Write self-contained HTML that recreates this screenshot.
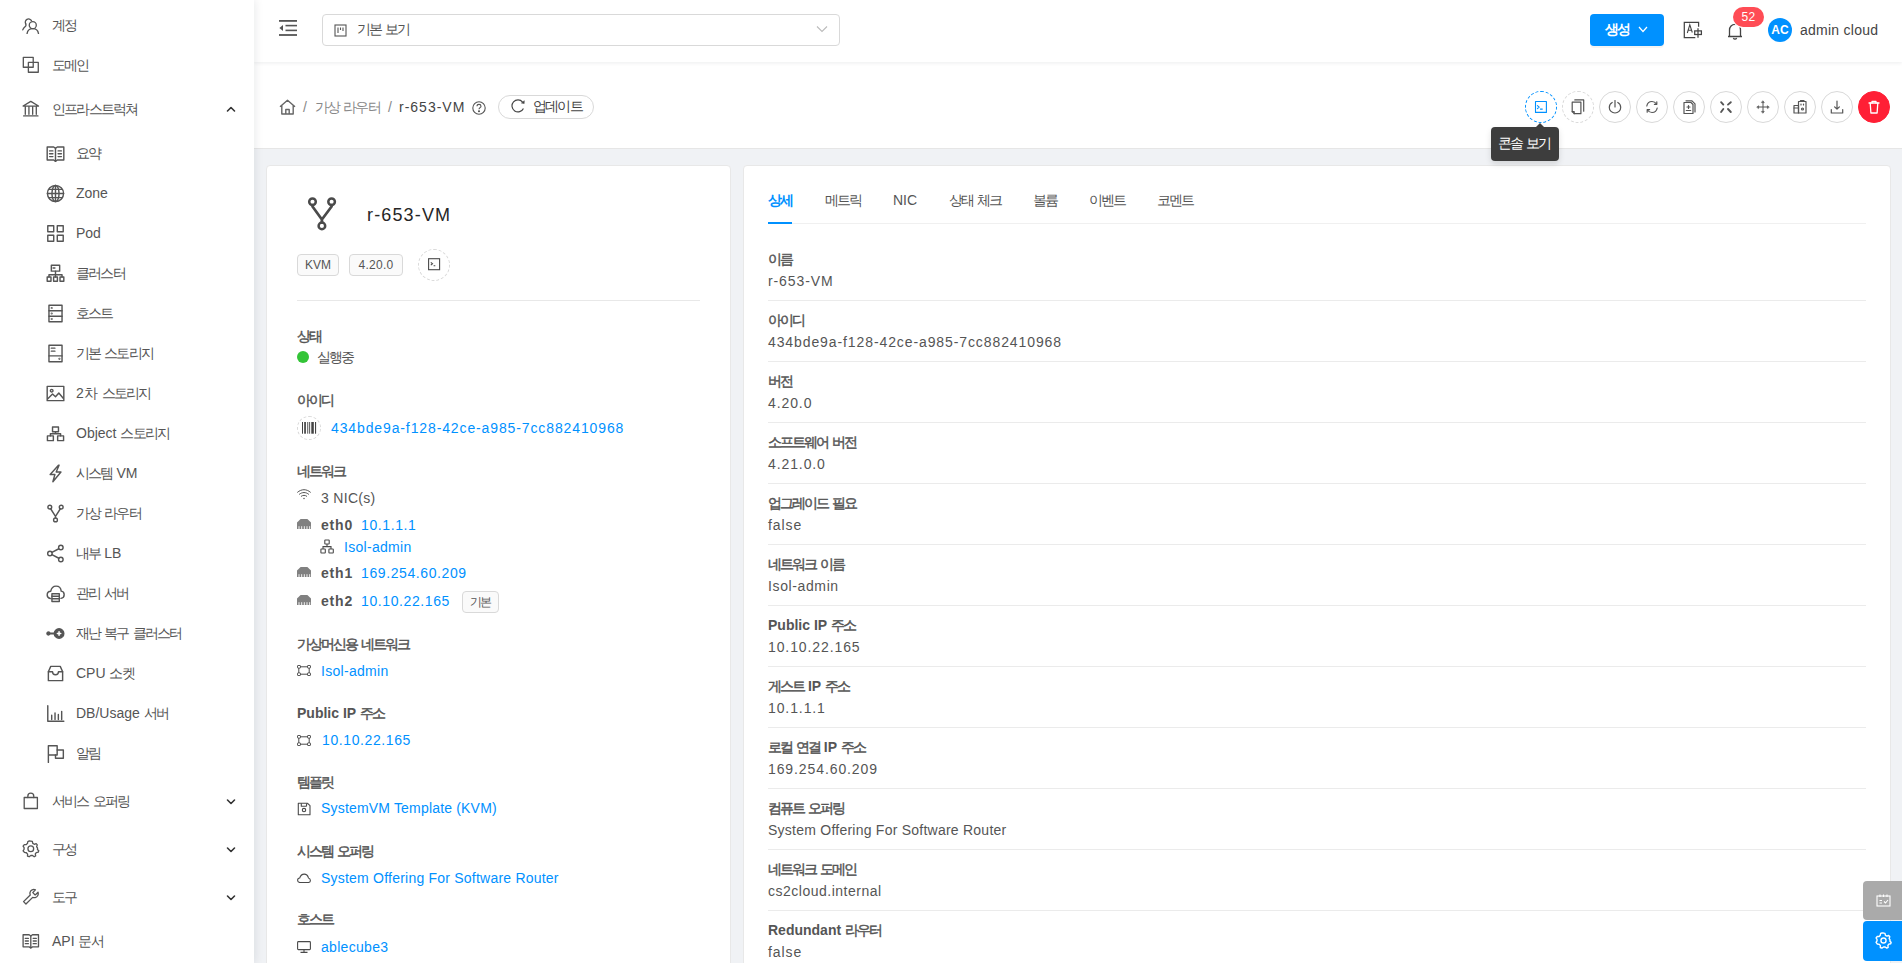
<!DOCTYPE html>
<html><head><meta charset="utf-8"><title>r-653-VM</title>
<style>
*{box-sizing:border-box;margin:0;padding:0}
html,body{width:1902px;height:963px;overflow:hidden;background:#f0f2f5;font-family:"Liberation Sans",sans-serif;font-size:14px;color:#555}
.abs{position:absolute;white-space:nowrap}
.k{letter-spacing:-1.8px}
.lbl .k{letter-spacing:-2px;font-weight:normal;-webkit-text-stroke:.45px #555}
.mt{font-size:14px;line-height:20px;color:#555;white-space:nowrap}
.ic svg{display:block}
#side{position:absolute;left:0;top:0;width:254px;height:963px;background:#fff;z-index:5;box-shadow:2px 0 8px rgba(0,21,41,.08)}
#header{position:absolute;left:254px;top:0;width:1648px;height:62px;background:#fff;box-shadow:0 1px 4px rgba(0,21,41,.08);z-index:3}
#crumb{position:absolute;left:254px;top:62px;width:1648px;height:86px;background:#fff;box-shadow:0 1px 0 #e6e6e6;z-index:2}
#hdr, #crb{position:absolute;left:0;top:0;z-index:6}
.actbtn{z-index:6;width:32px;height:32px;border-radius:50%;border:1px solid #d9d9d9;background:#fff;display:flex;align-items:center;justify-content:center}
.actbtn.dashblue{border:1px dashed #0091ff}
.actbtn.dashgrey{border:1px dashed #d9d9d9}
.actbtn.red{background:#ff1f35;border-color:#ff1f35}
.card{position:absolute;background:#fff;border:1px solid #e8e8e8;border-radius:5px}
.lbl{position:absolute;font-weight:bold;color:#555;line-height:20px;white-space:nowrap}
.val{position:absolute;color:#555;line-height:20px;white-space:nowrap}
.lnk{position:absolute;color:#0091ff;line-height:20px;white-space:nowrap}
.tag{position:absolute;height:22px;border:1px solid #d9d9d9;background:#fafafa;border-radius:4px;font-size:12px;line-height:20px;text-align:center;color:#555}
.div{position:absolute;height:1px;background:#ebebeb}
.tab{position:absolute;top:190px;line-height:20px;color:#555;white-space:nowrap}
</style></head><body>
<div id="side">
<div class="abs ic" style="left:22.2px;top:16.2px"><svg width="17.6" height="17.6" viewBox="0 0 16 16" fill="none" stroke="#555" stroke-width="1.2" stroke-linecap="round" stroke-linejoin="round" ><path d="M3.4 7.2 A2.9 2.9 0 1 1 8.6 4.2"/><path d="M3.4 7.2 C3.6 8.2 3.9 8.6 3.2 9.4 C2 10.4 1.1 11.2 0.7 12.6"/><circle cx="9.8" cy="8.3" r="3.2" fill="#fff"/><path d="M4.6 16 C5 13.2 7.2 11.5 9.8 11.5 C12.4 11.5 14.6 13.2 15 16"/></svg></div>
<div class="abs mt" style="left:52px;top:15px"><span class="k">계정</span></div>
<div class="abs ic" style="left:22.2px;top:56.2px"><svg width="17.6" height="17.6" viewBox="0 0 16 16" fill="none" stroke="#555" stroke-width="1.2" stroke-linecap="round" stroke-linejoin="round" ><rect x="1.2" y="1.2" width="9" height="9"/><rect x="5.8" y="5.8" width="9" height="9"/></svg></div>
<div class="abs mt" style="left:52px;top:55px"><span class="k">도메인</span></div>
<div class="abs ic" style="left:22.2px;top:100.2px"><svg width="17.6" height="17.6" viewBox="0 0 16 16" fill="none" stroke="#555" stroke-width="1.2" stroke-linecap="round" stroke-linejoin="round" ><path d="M1 5.5 L8 1.2 L15 5.5 Z"/><path d="M3 6 V13 M6.3 6 V13 M9.7 6 V13 M13 6 V13"/><path d="M1.5 14.5 H14.5"/></svg></div>
<div class="abs mt" style="left:52px;top:99px"><span class="k">인프라스트럭쳐</span></div>
<svg class="abs" style="left:226px;top:105px" width="10" height="9" viewBox="0 0 10 9" fill="none" stroke="#333" stroke-width="1.6" stroke-linecap="round" stroke-linejoin="round"><path d="M1.5 6 L5 2.5 L8.5 6"/></svg>
<div class="abs ic" style="left:22.2px;top:792.2px"><svg width="17.6" height="17.6" viewBox="0 0 16 16" fill="none" stroke="#555" stroke-width="1.2" stroke-linecap="round" stroke-linejoin="round" ><rect x="2" y="5" width="12" height="10"/><path d="M5.3 5 V3.8 C5.3 2.3 6.5 1.1 8 1.1 C9.5 1.1 10.7 2.3 10.7 3.8 V5"/></svg></div>
<div class="abs mt" style="left:52px;top:791px"><span class="k">서비스</span> <span class="k">오퍼링</span></div>
<svg class="abs" style="left:226px;top:797px" width="10" height="9" viewBox="0 0 10 9" fill="none" stroke="#333" stroke-width="1.6" stroke-linecap="round" stroke-linejoin="round"><path d="M1.5 3 L5 6.5 L8.5 3"/></svg>
<div class="abs ic" style="left:22.2px;top:840.2px"><svg width="17.6" height="17.6" viewBox="0 0 16 16" fill="none" stroke="#555" stroke-width="1.2" stroke-linecap="round" stroke-linejoin="round" ><path d="M8 1 L9.4 1.3 L9.8 3.1 L11.2 3.9 L12.9 3.3 L13.9 4.4 L13.3 6.2 L14.1 7.2 V8.8 L15.2 9.6 L14.8 11.1 L13 11.4 L12.1 12.7 L12.4 14.5 L11.1 15.2 L9.6 14.1 H8 L6.5 15.2 L5 14.6 L5.1 12.8 L4 11.6 L2.2 11.3 L1 9.8 L1.9 8.4 V7 L1 5.6 L2.1 4.2 L3.9 4.2 L5 3 L5.3 1.4 L6.6 0.9 Z"/><circle cx="8" cy="8" r="2.6"/></svg></div>
<div class="abs mt" style="left:52px;top:839px"><span class="k">구성</span></div>
<svg class="abs" style="left:226px;top:845px" width="10" height="9" viewBox="0 0 10 9" fill="none" stroke="#333" stroke-width="1.6" stroke-linecap="round" stroke-linejoin="round"><path d="M1.5 3 L5 6.5 L8.5 3"/></svg>
<div class="abs ic" style="left:22.2px;top:888.2px"><svg width="17.6" height="17.6" viewBox="0 0 16 16" fill="none" stroke="#555" stroke-width="1.2" stroke-linecap="round" stroke-linejoin="round" ><path d="M14.6 3.8 L12 6.3 L9.8 4.2 L12.2 1.6 C10.2 0.8 7.8 1.8 7.3 4 C7.1 4.8 7.2 5.6 7.5 6.3 L1.4 12.4 L3.6 14.6 L9.7 8.5 C10.4 8.8 11.2 8.9 12 8.7 C14.2 8.2 15.3 5.8 14.6 3.8 Z"/></svg></div>
<div class="abs mt" style="left:52px;top:887px"><span class="k">도구</span></div>
<svg class="abs" style="left:226px;top:893px" width="10" height="9" viewBox="0 0 10 9" fill="none" stroke="#333" stroke-width="1.6" stroke-linecap="round" stroke-linejoin="round"><path d="M1.5 3 L5 6.5 L8.5 3"/></svg>
<div class="abs ic" style="left:22.2px;top:932.2px"><svg width="17.6" height="17.6" viewBox="0 0 16 16" fill="none" stroke="#555" stroke-width="1.2" stroke-linecap="round" stroke-linejoin="round" ><path d="M1 2.5 H6.5 L8 3.6 L9.5 2.5 H15 V13.5 H9.5 L8 14.6 L6.5 13.5 H1 Z"/><path d="M8 3.6 V14.3"/><path d="M3 5.8 H5.8 M3 8.2 H5.8 M10.2 5.8 H13 M10.2 8.2 H13 M3 10.6 H5.8 M10.2 10.6 H13"/></svg></div>
<div class="abs mt" style="left:52px;top:931px">API <span class="k">문서</span></div>
<div class="abs ic" style="left:45.5px;top:143.5px"><svg width="19" height="19" viewBox="0 0 16 16" fill="none" stroke="#555" stroke-width="1.2" stroke-linecap="round" stroke-linejoin="round" ><path d="M1 2.5 H6.5 L8 3.6 L9.5 2.5 H15 V13.5 H9.5 L8 14.6 L6.5 13.5 H1 Z"/><path d="M8 3.6 V14.3"/><path d="M3 5.8 H5.8 M3 8.2 H5.8 M10.2 5.8 H13 M10.2 8.2 H13 M3 10.6 H5.8 M10.2 10.6 H13"/></svg></div>
<div class="abs mt" style="left:76px;top:143px"><span class="k">요약</span></div>
<div class="abs ic" style="left:45.5px;top:183.5px"><svg width="19" height="19" viewBox="0 0 16 16" fill="none" stroke="#555" stroke-width="1.2" stroke-linecap="round" stroke-linejoin="round" ><circle cx="8" cy="8" r="6.8"/><ellipse cx="8" cy="8" rx="3" ry="6.8"/><path d="M1.2 8 H14.8 M2.2 4.5 H13.8 M2.2 11.5 H13.8 M8 1.2 V14.8"/></svg></div>
<div class="abs mt" style="left:76px;top:183px">Zone</div>
<div class="abs ic" style="left:45.5px;top:223.5px"><svg width="19" height="19" viewBox="0 0 16 16" fill="none" stroke="#555" stroke-width="1.2" stroke-linecap="round" stroke-linejoin="round" ><rect x="1.5" y="1.5" width="5" height="5"/><rect x="9.5" y="1.5" width="5" height="5"/><rect x="1.5" y="9.5" width="5" height="5"/><rect x="9.5" y="9.5" width="5" height="5"/></svg></div>
<div class="abs mt" style="left:76px;top:223px">Pod</div>
<div class="abs ic" style="left:45.5px;top:263.5px"><svg width="19" height="19" viewBox="0 0 16 16" fill="none" stroke="#555" stroke-width="1.2" stroke-linecap="round" stroke-linejoin="round" ><rect x="4.5" y="1" width="7" height="5"/><path d="M8 6 V9 M2.5 9 H13.5 M2.5 9 V11 M8 9 V11 M13.5 9 V11"/><rect x="1" y="11" width="3.2" height="3.5"/><rect x="6.4" y="11" width="3.2" height="3.5"/><rect x="11.8" y="11" width="3.2" height="3.5"/><path d="M6 3.3 H7.5"/></svg></div>
<div class="abs mt" style="left:76px;top:263px"><span class="k">클러스터</span></div>
<div class="abs ic" style="left:45.5px;top:303.5px"><svg width="19" height="19" viewBox="0 0 16 16" fill="none" stroke="#555" stroke-width="1.2" stroke-linecap="round" stroke-linejoin="round" ><rect x="2.5" y="1" width="11" height="14"/><path d="M2.5 5.7 H13.5 M2.5 10.3 H13.5"/><circle cx="4.8" cy="3.4" r=".3"/><circle cx="4.8" cy="8" r=".3"/><circle cx="4.8" cy="12.6" r=".3"/></svg></div>
<div class="abs mt" style="left:76px;top:303px"><span class="k">호스트</span></div>
<div class="abs ic" style="left:45.5px;top:343.5px"><svg width="19" height="19" viewBox="0 0 16 16" fill="none" stroke="#555" stroke-width="1.2" stroke-linecap="round" stroke-linejoin="round" ><rect x="2.5" y="1" width="11" height="14"/><path d="M2.5 10 H13.5 M4.5 3.5 H7.5 M4.5 6 H7.5"/><circle cx="11.3" cy="12.5" r=".3"/></svg></div>
<div class="abs mt" style="left:76px;top:343px"><span class="k">기본</span> <span class="k">스토리지</span></div>
<div class="abs ic" style="left:45.5px;top:383.5px"><svg width="19" height="19" viewBox="0 0 16 16" fill="none" stroke="#555" stroke-width="1.2" stroke-linecap="round" stroke-linejoin="round" ><rect x="1" y="2" width="14" height="12"/><circle cx="4.8" cy="5.6" r="1.1"/><path d="M1.5 12.5 L5.5 8.5 L8 10.8 L10.8 7.6 L14.5 12"/></svg></div>
<div class="abs mt" style="left:76px;top:383px">2차 <span class="k">스토리지</span></div>
<div class="abs ic" style="left:45.5px;top:423.5px"><svg width="19" height="19" viewBox="0 0 16 16" fill="none" stroke="#555" stroke-width="1.2" stroke-linecap="round" stroke-linejoin="round" ><rect x="5.5" y="2.5" width="5" height="4"/><rect x="1.2" y="10" width="5" height="4"/><rect x="9.8" y="10" width="5" height="4"/><path d="M8 6.5 V8.2 H3.7 V10 M8 8.2 H12.3 V10"/></svg></div>
<div class="abs mt" style="left:76px;top:423px">Object <span class="k">스토리지</span></div>
<div class="abs ic" style="left:45.5px;top:463.5px"><svg width="19" height="19" viewBox="0 0 16 16" fill="none" stroke="#555" stroke-width="1.2" stroke-linecap="round" stroke-linejoin="round" ><path d="M10.5 1 L3.5 8.8 H7.5 L5.8 15 L12.6 6.8 H8.6 L11 1 Z"/></svg></div>
<div class="abs mt" style="left:76px;top:463px"><span class="k">시스템</span> VM</div>
<div class="abs ic" style="left:45.5px;top:503.5px"><svg width="19" height="19" viewBox="0 0 16 16" fill="none" stroke="#555" stroke-width="1.2" stroke-linecap="round" stroke-linejoin="round" ><circle cx="3.2" cy="2.6" r="1.6"/><circle cx="12.8" cy="2.6" r="1.6"/><circle cx="8" cy="13.4" r="1.6"/><path d="M3.9 4 L8 10.5 L12.1 4 M8 10.5 V11.8"/></svg></div>
<div class="abs mt" style="left:76px;top:503px"><span class="k">가상</span> <span class="k">라우터</span></div>
<div class="abs ic" style="left:45.5px;top:543.5px"><svg width="19" height="19" viewBox="0 0 16 16" fill="none" stroke="#555" stroke-width="1.2" stroke-linecap="round" stroke-linejoin="round" ><circle cx="12.5" cy="3" r="1.9"/><circle cx="3.3" cy="8" r="1.9"/><circle cx="12.5" cy="13" r="1.9"/><path d="M5 7.1 L10.8 4 M5 8.9 L10.8 12"/></svg></div>
<div class="abs mt" style="left:76px;top:543px"><span class="k">내부</span> LB</div>
<div class="abs ic" style="left:45.5px;top:583.5px"><svg width="19" height="19" viewBox="0 0 16 16" fill="none" stroke="#555" stroke-width="1.2" stroke-linecap="round" stroke-linejoin="round" ><path d="M3.6 12.2 C1.8 11.8 1 10.6 1 9.2 C1 7.4 2.4 6.2 4 6.1 C4.5 3.4 6.3 1.8 8.5 1.8 C10.9 1.8 12.6 3.6 12.8 6 C14.3 6.2 15.3 7.4 15.3 9 C15.3 10.6 14.3 11.8 12.6 12.1"/><rect x="5" y="8.2" width="6.2" height="6.5"/><path d="M5 10.3 H11.2 M5 12.4 H11.2"/></svg></div>
<div class="abs mt" style="left:76px;top:583px"><span class="k">관리</span> <span class="k">서버</span></div>
<div class="abs ic" style="left:45.5px;top:623.5px"><svg width="19" height="19" viewBox="0 0 16 16" fill="none" stroke="#555" stroke-width="1.2" stroke-linecap="round" stroke-linejoin="round" ><circle cx="11" cy="8" r="4" fill="#555"/><path d="M9.6 8 H12.4 M11 6.6 V9.4" stroke="#fff" stroke-width="1.3"/><path d="M2.5 8 H7" stroke-width="1.5"/><circle cx="2" cy="8" r="1.2" fill="#555"/></svg></div>
<div class="abs mt" style="left:76px;top:623px"><span class="k">재난</span> <span class="k">복구</span> <span class="k">클러스터</span></div>
<div class="abs ic" style="left:45.5px;top:663.5px"><svg width="19" height="19" viewBox="0 0 16 16" fill="none" stroke="#555" stroke-width="1.2" stroke-linecap="round" stroke-linejoin="round" ><path d="M2 6.5 L4 2 H12 L14 6.5 V14 H2 Z"/><path d="M2 6.5 H5.5 C5.5 8 6.6 9 8 9 C9.4 9 10.5 8 10.5 6.5 H14"/></svg></div>
<div class="abs mt" style="left:76px;top:663px">CPU <span class="k">소켓</span></div>
<div class="abs ic" style="left:45.5px;top:703.5px"><svg width="19" height="19" viewBox="0 0 16 16" fill="none" stroke="#555" stroke-width="1.2" stroke-linecap="round" stroke-linejoin="round" ><path d="M1.5 1.5 V14.5 H15"/><path d="M4.8 13 V9.5 M7.6 13 V7.5 M10.4 13 V8.8 M13.2 13 V6.2"/></svg></div>
<div class="abs mt" style="left:76px;top:703px">DB/Usage <span class="k">서버</span></div>
<div class="abs ic" style="left:45.5px;top:743.5px"><svg width="19" height="19" viewBox="0 0 16 16" fill="none" stroke="#555" stroke-width="1.2" stroke-linecap="round" stroke-linejoin="round" ><path d="M2 15.5 V1.5 H9.4 V5 H14.6 V12 H8 V9.2 H2.2"/><path d="M9.4 5 V9.2 H8"/></svg></div>
<div class="abs mt" style="left:76px;top:743px"><span class="k">알림</span></div>
</div>
<div id="header"></div>
<div id="crumb"></div>
<div id="hdr">
<svg class="abs" style="left:279px;top:14px" width="18" height="24" viewBox="0 0 18 24" fill="#555"><rect x="0" y="6" width="18" height="1.8"/><rect x="6.5" y="10.8" width="11.5" height="1.6"/><rect x="6.5" y="15.6" width="11.5" height="1.6"/><rect x="0" y="20.1" width="18" height="1.8"/><path d="M0.4 14 L4 10.9 V17.1 Z"/></svg>
<div class="abs" style="left:322px;top:14px;width:518px;height:32px;border:1px solid #d9d9d9;border-radius:4px;background:#fff"></div>
<svg class="abs" style="left:334px;top:24px" width="13" height="13" viewBox="0 0 13 13" fill="none" stroke="#555" stroke-width="1.1"><rect x="1" y="1" width="11" height="11"/><path d="M4 3.5 V9 M6.5 3.5 V6 M9 3.5 V7"/></svg>
<div class="abs mt" style="left:357px;top:19px"><span class="k">기본</span> <span class="k">보기</span></div>
<svg class="abs" style="left:816px;top:25px" width="12" height="8" viewBox="0 0 12 8" fill="none" stroke="#bbb" stroke-width="1.1"><path d="M1 1.5 L6 6.5 L11 1.5"/></svg>
<div class="abs" style="left:1590px;top:14px;width:74px;height:32px;border-radius:4px;background:#0091ff;box-shadow:0 2px 0 rgba(0,0,0,.045)"></div>
<div class="abs" style="left:1605px;top:19px;color:#fff;font-weight:bold;line-height:20px"><span class="k">생성</span></div>
<svg class="abs" style="left:1638px;top:26px" width="10" height="7" viewBox="0 0 10 7" fill="none" stroke="#fff" stroke-width="1.2"><path d="M1 1 L5 5.5 L9 1"/></svg>
<svg class="abs" style="left:1683px;top:21px" width="20" height="18" viewBox="0 0 20 18" fill="none" stroke="#444" stroke-width="1.25"><path d="M12.3 16.5 H1.3 V1.3 H15.6 V5.7"/><path d="M4.3 12 L6.8 3.8 L9.3 11.5 M5.3 9.2 H8.5" stroke-width="1.05"/><rect x="11.7" y="9.9" width="6.7" height="3.6"/><path d="M15 7.3 V16.8"/></svg>
<svg class="abs" style="left:1727px;top:22px" width="16" height="18" viewBox="0 0 16 18" fill="none" stroke="#444" stroke-width="1.3"><path d="M2.5 14.5 V8 C2.5 4.8 4.8 2.3 8 2.3 C11.2 2.3 13.5 4.8 13.5 8 V14.5 M1 14.5 H15 M6.3 16.2 C6.8 17 7.4 17.2 8 17.2 C8.6 17.2 9.2 17 9.7 16.2"/></svg>
<div class="abs" style="left:1733px;top:7px;width:31px;height:20px;border-radius:10px;background:#ff4c55;box-shadow:0 0 0 1px #fff;color:#fff;font-size:12px;line-height:20px;text-align:center;letter-spacing:.3px;z-index:2">52</div>
<div class="abs" style="left:1768px;top:18px;width:24px;height:24px;border-radius:50%;background:#0091ff;color:#fff;font-size:12px;line-height:24px;text-align:center;font-weight:bold">AC</div>
<div class="abs" style="left:1800px;top:20px;line-height:20px;color:#444;letter-spacing:.25px">admin cloud</div>
<svg class="abs" style="left:279px;top:99px" width="17" height="16" viewBox="0 0 17 16" fill="none" stroke="#666" stroke-width="1.4" stroke-linejoin="round"><path d="M1 7.8 L8.5 1.2 L16 7.8 M2.8 6.5 V15 H14.2 V6.5 M6.8 15 V10.5 H10.2 V15"/></svg>
<div class="abs mt" style="left:303px;top:97px;color:#888">/</div>
<div class="abs mt" style="left:315px;top:97px;color:#888"><span class="k">가상</span> <span class="k">라우터</span></div>
<div class="abs mt" style="left:388px;top:97px;color:#888">/</div>
<div class="abs mt" style="left:399px;top:97px;color:#444;letter-spacing:1px">r-653-VM</div>
<svg class="abs" style="left:472px;top:101px" width="14" height="14" viewBox="0 0 14 14" fill="none" stroke="#555" stroke-width="1.1"><circle cx="7" cy="7" r="6.2"/><path d="M5 5.3 C5 4.1 5.9 3.4 7 3.4 C8.1 3.4 9 4.1 9 5.2 C9 6.6 7 6.7 7 8.3"/><circle cx="7" cy="10.3" r=".5" fill="#555"/></svg>
<div class="abs" style="left:498px;top:95px;width:96px;height:24px;border:1px solid #d9d9d9;border-radius:12px;background:#fff"></div>
<svg class="abs" style="left:511px;top:99px" width="14" height="14" viewBox="0 0 14 14" fill="none" stroke="#444" stroke-width="1.15"><path d="M11.6 3.04 A6 6 0 1 0 12.44 9.44"/><path d="M13.3 1.7 L13.2 4.6 L10.4 4.1 Z" fill="#444" stroke-width=".5"/></svg>
<div class="abs mt" style="left:533px;top:96px;color:#444"><span class="k">업데이트</span></div>
</div>
<div class="abs actbtn dashblue" style="left:1525px;top:91px"><svg width="16" height="16" viewBox="0 0 16 16" fill="none" stroke="#555" stroke-width="1.2" stroke-linecap="round" stroke-linejoin="round"><rect x="2.5" y="2.5" width="10.9" height="10.9" stroke="#0091ff" stroke-width="1.1"/><path d="M4.4 6.6 L6.2 8.1 L4.4 9.7 M7.4 10.1 H9.3" stroke="#0091ff" stroke-width="1.1"/></svg></div>
<div class="abs actbtn dashgrey" style="left:1562px;top:91px"><svg width="16" height="16" viewBox="0 0 16 16" fill="none" stroke="#555" stroke-width="1.2" stroke-linecap="round" stroke-linejoin="round"><path d="M2.2 3.2 H10.9 V14.7 H4.2 L2.2 12.7 Z"/><path d="M4.2 14.7 V12.7 H2.2"/><path d="M4.8 0.9 H13.7 V12.2"/></svg></div>
<div class="abs actbtn" style="left:1599px;top:91px"><svg width="16" height="16" viewBox="0 0 16 16" fill="none" stroke="#555" stroke-width="1.2" stroke-linecap="round" stroke-linejoin="round"><path d="M5.2 3.5 C3.3 4.5 2.3 6.3 2.3 8.4 C2.3 11.5 4.9 14 8 14 C11.1 14 13.7 11.5 13.7 8.4 C13.7 6.3 12.7 4.5 10.8 3.5"/><path d="M8 1.6 V8"/></svg></div>
<div class="abs actbtn" style="left:1636px;top:91px"><svg width="16" height="16" viewBox="0 0 16 16" fill="none" stroke="#555" stroke-width="1.2" stroke-linecap="round" stroke-linejoin="round"><path d="M2.8 7 C3.3 4.3 5.4 2.5 8 2.5 C9.9 2.5 11.5 3.5 12.5 5 M13.2 9 C12.7 11.7 10.6 13.5 8 13.5 C6.1 13.5 4.5 12.5 3.5 11"/><path d="M12.8 2.8 V5.3 H10.4 M3.2 13.2 V10.7 H5.6"/></svg></div>
<div class="abs actbtn" style="left:1673px;top:91px"><svg width="16" height="16" viewBox="0 0 16 16" fill="none" stroke="#555" stroke-width="1.2" stroke-linecap="round" stroke-linejoin="round"><path d="M3 3.5 H10 L12 5.5 V14.5 H3 Z"/><path d="M5 1.8 H11 L14 4.8 V13"/><path d="M5.3 11.5 H9.7"/><path d="M7.5 6.5 V9.5 M6 8 H9"/></svg></div>
<div class="abs actbtn" style="left:1710px;top:91px"><svg width="16" height="16" viewBox="0 0 16 16" fill="none" stroke="#555" stroke-width="1.2" stroke-linecap="round" stroke-linejoin="round"><path d="M3.1 3.2 L5.3 5.6 M10 5.6 L12.8 3.2 M3.1 13 L5.3 10 M10 10 L12.8 13" stroke-width="1.9"/></svg></div>
<div class="abs actbtn" style="left:1747px;top:91px"><svg width="16" height="16" viewBox="0 0 16 16" fill="none" stroke="#555" stroke-width="1.2" stroke-linecap="round" stroke-linejoin="round"><path d="M8 3 V13 M3 8 H13" stroke-width="1"/><path d="M8 2 L9.3 3.6 H6.7 Z M8 14 L9.3 12.4 H6.7 Z M2 8 L3.6 6.7 V9.3 Z M14 8 L12.4 6.7 V9.3 Z" fill="#555" stroke-width=".6"/></svg></div>
<div class="abs actbtn" style="left:1784px;top:91px"><svg width="16" height="16" viewBox="0 0 16 16" fill="none" stroke="#555" stroke-width="1.2" stroke-linecap="round" stroke-linejoin="round"><rect x="6.5" y="2.5" width="7.5" height="11.5"/><path d="M8.5 2.5 V1.5 H12 V2.5"/><rect x="2" y="6.5" width="4.5" height="7.5"/><path d="M2 9 H6.5"/><path d="M9 5 V6 M11.5 5 V6"/><circle cx="10.5" cy="10" r="1"/></svg></div>
<div class="abs actbtn" style="left:1821px;top:91px"><svg width="16" height="16" viewBox="0 0 16 16" fill="none" stroke="#555" stroke-width="1.2" stroke-linecap="round" stroke-linejoin="round"><path d="M8 2 V10 M5.6 7.8 L8 10.2 L10.4 7.8"/><path d="M2.3 10.5 V14 H13.7 V10.5"/></svg></div>
<div class="abs actbtn red" style="left:1858px;top:91px"><svg width="16" height="16" viewBox="0 0 16 16" fill="none" stroke="#555" stroke-width="1.2" stroke-linecap="round" stroke-linejoin="round"><path d="M3 4 H13" stroke="#fff" stroke-width="1.3"/><path d="M6 4 V2.5 H10 V4" stroke="#fff" stroke-width="1.3"/><path d="M4.2 4 L4.9 14 H11.1 L11.8 4" stroke="#fff" stroke-width="1.3"/></svg></div>
<div class="abs" style="left:1491px;top:127px;width:68px;height:34px;background:#3d3d3d;border-radius:4px;z-index:9;box-shadow:0 3px 6px rgba(0,0,0,.12)"></div>
<div class="abs" style="left:1535px;top:123px;width:0;height:0;border-left:5px solid transparent;border-right:5px solid transparent;border-bottom:5px solid #3d3d3d;z-index:9"></div>
<div class="abs" style="left:1497.5px;top:133px;color:#fff;line-height:20px;z-index:10;white-space:nowrap"><span class="k">콘솔</span> <span class="k">보기</span></div>
<div class="card" style="left:266px;top:165px;width:465px;height:820px;border-radius:4px"></div>
<div class="card" style="left:743px;top:165px;width:1148px;height:820px;border-radius:4px"></div>
<svg class="abs" style="left:300px;top:190px" width="45" height="48" viewBox="0 0 45 48" fill="none" stroke="#4a4a4a" stroke-width="2.5" stroke-linecap="round" stroke-linejoin="round"><circle cx="12.5" cy="11.7" r="3.3"/><circle cx="31.6" cy="11.7" r="3.3"/><circle cx="21.9" cy="35.9" r="3.3"/><path d="M12.5 15 V16.5 L21.9 29.5 L31.6 16.5 V15 M21.9 29.5 V32.6" stroke-width="2.7"/></svg>
<div class="abs" style="left:367px;top:203px;font-size:18px;line-height:24px;color:#262626;letter-spacing:1.15px">r-653-VM</div>
<div class="tag" style="left:297px;top:254px;width:42px">KVM</div>
<div class="tag" style="left:349px;top:254px;width:54px;letter-spacing:.3px">4.20.0</div>
<div class="abs" style="left:418px;top:249px;width:32px;height:32px;border:1px dashed #d9d9d9;border-radius:50%"></div>
<svg class="abs" style="left:427px;top:257px" width="14" height="14" viewBox="0 0 14 14" fill="none" stroke="#4a4a4a" stroke-width="1.1"><rect x="1.6" y="1.7" width="11" height="11"/><path d="M3.8 5.3 L5.5 6.7 L3.8 8.1 M6.6 8.7 H8.3"/></svg>
<div class="div" style="left:297px;top:300px;width:403px;background:#e8e8e8"></div>
<div class="lbl" style="left:297px;top:326px;"><span class="k">상태</span></div>
<div class="abs" style="left:297px;top:351px;width:12px;height:12px;border-radius:50%;background:#33c437"></div>
<div class="val" style="left:317px;top:347px;"><span class="k">실행중</span></div>
<div class="lbl" style="left:297px;top:390px;"><span class="k">아이디</span></div>
<div class="abs" style="left:297px;top:416px;width:24px;height:24px;border:1px dashed #d9d9d9;border-radius:50%"></div>
<svg class="abs" style="left:301px;top:421px" width="16" height="14" viewBox="0 0 16 14" fill="#444"><rect x="1" y="1" width="1" height="11.7"/><rect x="3.2" y="1" width="1.7" height="11.7"/><rect x="6.3" y="1" width=".9" height="11.7"/><rect x="8.2" y="1" width=".9" height="11.7"/><rect x="10.3" y="1" width="2.5" height="11.7"/><rect x="14" y="1" width="1.1" height="11.7"/></svg>
<div class="lnk" style="left:331px;top:418px;letter-spacing:.88px">434bde9a-f128-42ce-a985-7cc882410968</div>
<div class="lbl" style="left:297px;top:461px;"><span class="k">네트워크</span></div>
<svg class="abs" style="left:297px;top:488.5px" width="14" height="12" viewBox="0 0 14 12" fill="none" stroke="#555" stroke-width="1" stroke-linecap="round"><path d="M0.6 3.2 C4.6 -0.2 9.4 -0.2 13.4 3.2 M2.4 5.2 C5.2 2.9 8.8 2.9 11.6 5.2 M4.3 7.2 C5.9 6 8.1 6 9.7 7.2"/><circle cx="7" cy="9.6" r=".75" fill="#555" stroke="none"/></svg>
<div class="val" style="left:321px;top:488px;letter-spacing:.3px">3 NIC(s)</div>
<svg class="abs" style="left:297px;top:519px" width="14" height="10.2" viewBox="0 0 14 10.2"><path d="M0 3.6 L3.6 0 H10.4 L14 3.6 V10.2 H0 Z" fill="#808080" stroke="none"/><path d="M2 7.2 V10.2 M4.67 7.2 V10.2 M7.33 7.2 V10.2 M10 7.2 V10.2 M12.67 7.2 V10.2" stroke="#f2f2f2" stroke-width="1" stroke-linecap="butt"/></svg>
<div class="lbl" style="left:321px;top:515px;letter-spacing:.8px">eth0</div>
<div class="lnk" style="left:361px;top:515px;letter-spacing:.6px">10.1.1.1</div>
<svg class="abs" style="left:297px;top:567px" width="14" height="10.2" viewBox="0 0 14 10.2"><path d="M0 3.6 L3.6 0 H10.4 L14 3.6 V10.2 H0 Z" fill="#808080" stroke="none"/><path d="M2 7.2 V10.2 M4.67 7.2 V10.2 M7.33 7.2 V10.2 M10 7.2 V10.2 M12.67 7.2 V10.2" stroke="#f2f2f2" stroke-width="1" stroke-linecap="butt"/></svg>
<div class="lbl" style="left:321px;top:563px;letter-spacing:.8px">eth1</div>
<div class="lnk" style="left:361px;top:563px;letter-spacing:.6px">169.254.60.209</div>
<svg class="abs" style="left:297px;top:595px" width="14" height="10.2" viewBox="0 0 14 10.2"><path d="M0 3.6 L3.6 0 H10.4 L14 3.6 V10.2 H0 Z" fill="#808080" stroke="none"/><path d="M2 7.2 V10.2 M4.67 7.2 V10.2 M7.33 7.2 V10.2 M10 7.2 V10.2 M12.67 7.2 V10.2" stroke="#f2f2f2" stroke-width="1" stroke-linecap="butt"/></svg>
<div class="lbl" style="left:321px;top:591px;letter-spacing:.8px">eth2</div>
<div class="lnk" style="left:361px;top:591px;letter-spacing:.6px">10.10.22.165</div>
<svg class="abs" style="left:320px;top:538.5px" width="14" height="15" viewBox="0 0 14 15" fill="none" stroke="#4a4a4a" stroke-width="1.1"><rect x="4.8" y="1" width="4.4" height="4" rx=".5"/><rect x="0.9" y="10" width="4.4" height="4" rx=".5"/><rect x="8.9" y="10" width="4.4" height="4" rx=".5"/><path d="M7 5 V7.6 M3 10 V7.6 H11 V10"/></svg>
<div class="lnk" style="left:344px;top:537px;letter-spacing:.3px">Isol-admin</div>
<div class="tag" style="left:462px;top:591px;width:37px;height:22px"><span class="k">기본</span></div>
<div class="lbl" style="left:297px;top:634px;"><span class="k">가상머신용</span> <span class="k">네트워크</span></div>
<svg class="abs" style="left:297px;top:665.3px" width="14" height="11" viewBox="0 0 14 11" fill="none" stroke="#4a4a4a" stroke-width="1"><rect x="0.5" y="0.5" width="3" height="2.6" rx=".6"/><rect x="10.5" y="0.5" width="3" height="2.6" rx=".6"/><rect x="0.5" y="7.9" width="3" height="2.6" rx=".6"/><rect x="10.5" y="7.9" width="3" height="2.6" rx=".6"/><path d="M3.5 1.8 H10.5 M3.5 9.2 H10.5 M1.8 3.1 V7.9 M12.2 3.1 V7.9"/></svg>
<div class="lnk" style="left:321px;top:661px;letter-spacing:.3px">Isol-admin</div>
<div class="lbl" style="left:297px;top:703px;">Public IP <span class="k">주소</span></div>
<svg class="abs" style="left:297px;top:734.5px" width="14" height="11" viewBox="0 0 14 11" fill="none" stroke="#4a4a4a" stroke-width="1"><rect x="0.5" y="0.5" width="3" height="2.6" rx=".6"/><rect x="10.5" y="0.5" width="3" height="2.6" rx=".6"/><rect x="0.5" y="7.9" width="3" height="2.6" rx=".6"/><rect x="10.5" y="7.9" width="3" height="2.6" rx=".6"/><path d="M3.5 1.8 H10.5 M3.5 9.2 H10.5 M1.8 3.1 V7.9 M12.2 3.1 V7.9"/></svg>
<div class="lnk" style="left:322px;top:730px;letter-spacing:.6px">10.10.22.165</div>
<div class="lbl" style="left:297px;top:772px;"><span class="k">템플릿</span></div>
<svg class="abs" style="left:297px;top:802px" width="14" height="14" viewBox="0 0 14 14" fill="none" stroke="#4a4a4a" stroke-width="1.1" stroke-linejoin="round"><path d="M1.3 1.3 H10.6 L13 3.7 V12.7 H1.3 Z"/><path d="M4.3 1.3 V4.2 H9.4 L9.8 1.3"/><circle cx="7" cy="8.1" r="1.7"/></svg>
<div class="lnk" style="left:321px;top:798px;letter-spacing:.18px">SystemVM Template (KVM)</div>
<div class="lbl" style="left:297px;top:841px;"><span class="k">시스템</span> <span class="k">오퍼링</span></div>
<svg class="abs" style="left:297px;top:872.5px" width="14" height="10.5" viewBox="0 0 14 10.5" fill="none" stroke="#4a4a4a" stroke-width="1.1" stroke-linejoin="round"><path d="M3 9.5 C1.5 9.5 0.6 8.5 0.6 7.3 C0.6 6.1 1.6 5.1 2.7 5 C3.3 3 4.9 1.1 7.2 1.1 C9.4 1.1 10.9 2.9 11.5 4.9 C12.7 5.3 13.4 6.3 13.4 7.4 C13.4 8.6 12.5 9.5 11.2 9.5 Z"/></svg>
<div class="lnk" style="left:321px;top:868px;letter-spacing:.22px">System Offering For Software Router</div>
<div class="lbl" style="left:297px;top:909px;"><span class="k">호스트</span></div>
<svg class="abs" style="left:297px;top:941px" width="14" height="12" viewBox="0 0 14 12" fill="none" stroke="#4a4a4a" stroke-width="1.1"><rect x=".6" y=".6" width="12.8" height="8" rx=".8"/><path d="M7 8.6 V11.2 M3.5 11.4 H10.5"/></svg>
<div class="lnk" style="left:321px;top:937px;letter-spacing:.3px">ablecube3</div>
<div class="tab" style="left:768px;color:#0091ff;font-weight:bold;letter-spacing:-.6px"><span class="k">상세</span></div>
<div class="tab" style="left:825px;"><span class="k">메트릭</span></div>
<div class="tab" style="left:893px;">NIC</div>
<div class="tab" style="left:949px;"><span class="k">상태</span> <span class="k">체크</span></div>
<div class="tab" style="left:1033px;"><span class="k">볼륨</span></div>
<div class="tab" style="left:1089px;"><span class="k">이벤트</span></div>
<div class="tab" style="left:1157px;"><span class="k">코멘트</span></div>
<div class="div" style="left:768px;top:223px;width:1098px;background:#f0f0f0"></div>
<div class="abs" style="left:768px;top:222px;width:24px;height:2px;background:#0091ff"></div>
<div class="lbl" style="left:768px;top:249px"><span class="k">이름</span></div>
<div class="val" style="left:768px;top:271px;letter-spacing:0.9px">r-653-VM</div>
<div class="div" style="left:768px;top:300px;width:1098px"></div>
<div class="lbl" style="left:768px;top:310px"><span class="k">아이디</span></div>
<div class="val" style="left:768px;top:332px;letter-spacing:0.9px">434bde9a-f128-42ce-a985-7cc882410968</div>
<div class="div" style="left:768px;top:361px;width:1098px"></div>
<div class="lbl" style="left:768px;top:371px"><span class="k">버전</span></div>
<div class="val" style="left:768px;top:393px;letter-spacing:0.9px">4.20.0</div>
<div class="div" style="left:768px;top:422px;width:1098px"></div>
<div class="lbl" style="left:768px;top:432px"><span class="k">소프트웨어</span> <span class="k">버전</span></div>
<div class="val" style="left:768px;top:454px;letter-spacing:0.9px">4.21.0.0</div>
<div class="div" style="left:768px;top:483px;width:1098px"></div>
<div class="lbl" style="left:768px;top:493px"><span class="k">업그레이드</span> <span class="k">필요</span></div>
<div class="val" style="left:768px;top:515px;letter-spacing:0.9px">false</div>
<div class="div" style="left:768px;top:544px;width:1098px"></div>
<div class="lbl" style="left:768px;top:554px"><span class="k">네트워크</span> <span class="k">이름</span></div>
<div class="val" style="left:768px;top:576px;letter-spacing:0.62px">Isol-admin</div>
<div class="div" style="left:768px;top:605px;width:1098px"></div>
<div class="lbl" style="left:768px;top:615px">Public IP <span class="k">주소</span></div>
<div class="val" style="left:768px;top:637px;letter-spacing:0.9px">10.10.22.165</div>
<div class="div" style="left:768px;top:666px;width:1098px"></div>
<div class="lbl" style="left:768px;top:676px"><span class="k">게스트</span> IP <span class="k">주소</span></div>
<div class="val" style="left:768px;top:698px;letter-spacing:0.9px">10.1.1.1</div>
<div class="div" style="left:768px;top:727px;width:1098px"></div>
<div class="lbl" style="left:768px;top:737px"><span class="k">로컬</span> <span class="k">연결</span> IP <span class="k">주소</span></div>
<div class="val" style="left:768px;top:759px;letter-spacing:0.9px">169.254.60.209</div>
<div class="div" style="left:768px;top:788px;width:1098px"></div>
<div class="lbl" style="left:768px;top:798px"><span class="k">컴퓨트</span> <span class="k">오퍼링</span></div>
<div class="val" style="left:768px;top:820px;letter-spacing:0.24px">System Offering For Software Router</div>
<div class="div" style="left:768px;top:849px;width:1098px"></div>
<div class="lbl" style="left:768px;top:859px"><span class="k">네트워크</span> <span class="k">도메인</span></div>
<div class="val" style="left:768px;top:881px;letter-spacing:0.5px">cs2cloud.internal</div>
<div class="div" style="left:768px;top:910px;width:1098px"></div>
<div class="lbl" style="left:768px;top:920px">Redundant <span class="k">라우터</span></div>
<div class="val" style="left:768px;top:942px;letter-spacing:0.9px">false</div>
<div class="abs" style="left:1863px;top:881px;width:39px;height:39px;background:#aaa;border-radius:4px 0 0 4px;z-index:9"></div>
<svg class="abs" style="left:1876px;top:894px;z-index:10" width="15" height="13" viewBox="0 0 15 13" fill="none" stroke="#fff" stroke-width="1.1"><rect x="1" y="2" width="13" height="10"/><path d="M4 .5 V3 M7.5 .5 V3 M11 .5 V3 M3.5 6.5 H6 M3.5 9 H6 M8 7.5 L9.5 9 L12 6"/></svg>
<div class="abs" style="left:1863px;top:921px;width:39px;height:40px;background:#0091ff;border-radius:4px 0 0 4px;z-index:9"></div>
<svg class="abs" style="left:1875px;top:932px;z-index:10" width="17" height="17" viewBox="0 0 16 16" fill="none" stroke="#fff" stroke-width="1.3" stroke-linejoin="round"><path d="M8 1 L9.4 1.3 L9.8 3.1 L11.2 3.9 L12.9 3.3 L13.9 4.4 L13.3 6.2 L14.1 7.2 V8.8 L15.2 9.6 L14.8 11.1 L13 11.4 L12.1 12.7 L12.4 14.5 L11.1 15.2 L9.6 14.1 H8 L6.5 15.2 L5 14.6 L5.1 12.8 L4 11.6 L2.2 11.3 L1 9.8 L1.9 8.4 V7 L1 5.6 L2.1 4.2 L3.9 4.2 L5 3 L5.3 1.4 L6.6 0.9 Z"/><circle cx="8" cy="8" r="2.4"/></svg>
</body></html>
